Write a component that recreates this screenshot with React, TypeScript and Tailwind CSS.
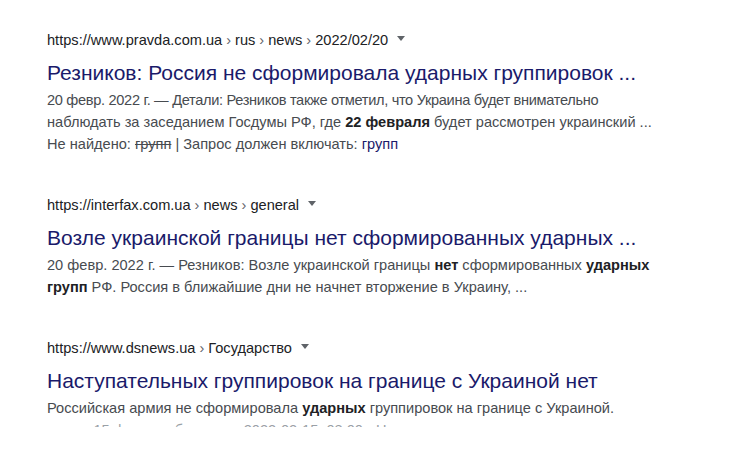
import React from 'react';

interface Result {
  url: string[];
  title: string;
  snippet: React.ReactNode;
}

const Caret = () => (
  <svg width="8" height="5" viewBox="0 0 8 5" className="ml-[9px] mb-[3px] inline-block">
    <path d="M0 0 L8 0 L4 5 Z" fill="#5f6368" />
  </svg>
);

const results: Result[] = [
  {
    url: ['https://www.pravda.com.ua', 'rus', 'news', '2022/02/20'],
    title: 'Резников: Россия не сформировала ударных группировок ...',
    snippet: (
      <>
        <div className="tracking-[-0.32px]">
          20 февр. 2022 г. — Детали: Резников также отметил, что Украина будет внимательно
        </div>
        <div>
          наблюдать за заседанием Госдумы РФ, где <b className="text-[#202124]">22 февраля</b> будет рассмотрен украинский ...
        </div>
        <div>
          <span>Не найдено: </span>
          <span className="line-through">групп</span>
          <span> | Запрос должен включать: </span>
          <span className="text-[#1a1a6a]">групп</span>
        </div>
      </>
    ),
  },
  {
    url: ['https://interfax.com.ua', 'news', 'general'],
    title: 'Возле украинской границы нет сформированных ударных ...',
    snippet: (
      <>
        <div>
          20 февр. 2022 г. — Резников: Возле украинской границы <b className="text-[#202124]">нет</b> сформированных{' '}
          <b className="text-[#202124]">ударных</b>
        </div>
        <div>
          <b className="text-[#202124]">групп</b> РФ. Россия в ближайшие дни не начнет вторжение в Украину, ...
        </div>
      </>
    ),
  },
  {
    url: ['https://www.dsnews.ua', 'Государство'],
    title: 'Наступательных группировок на границе с Украиной нет',
    snippet: (
      <>
        <div>
          Российская армия не сформировала <b className="text-[#202124]">ударных</b> группировок на границе с Украиной.
        </div>
        <div className="text-[#9aa0a6]">автор: 15 февр. · обновлено 2022-02-15, 08:00 · Новости</div>
      </>
    ),
  },
];

const App: React.FC = () => {
  return (
    <div
      className="w-[746px] h-[427px] overflow-hidden bg-white pl-[47px] pt-[29px]"
      style={{ fontFamily: '"Liberation Sans", Arial, sans-serif' }}
    >
      <div className="flex flex-col gap-[39px]">
        {results.map((r) => (
          <div key={r.title}>
            <div className="h-[22px] leading-[22px] text-[14.6px] text-[#202124] flex items-center whitespace-nowrap">
              <span>{r.url[0]}</span>
              {r.url.slice(1).map((part) => (
                <span key={part}>
                  <span className="text-[#5f6368] mx-[4px]">›</span>
                  {part}
                </span>
              ))}
              <Caret />
            </div>
            <div className="mt-[9px] text-[21px] leading-[26px] text-[#1a1a6a] whitespace-nowrap">{r.title}</div>
            <div className="mt-[3px] text-[14.6px] leading-[22px] text-[#474b50] whitespace-nowrap">{r.snippet}</div>
          </div>
        ))}
      </div>
    </div>
  );
};

export default App;
